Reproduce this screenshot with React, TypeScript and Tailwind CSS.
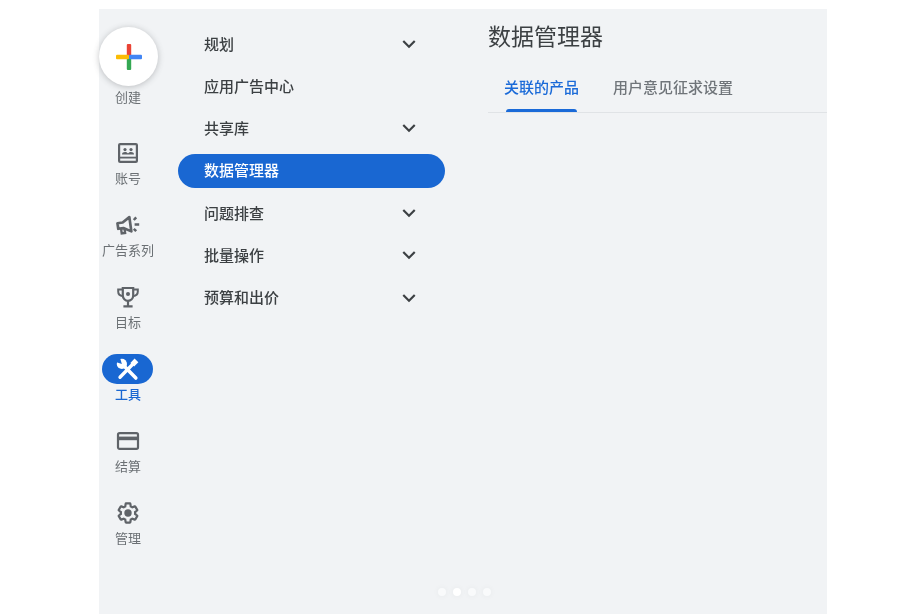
import React from "react";
import { MdExpandMore } from "react-icons/md";

const font = { fontFamily: '"Noto Sans CJK SC", "Liberation Sans", sans-serif' };
const gray = "#5f6368";

function AccountIcon() {
  return (
    <svg width="24" height="24" viewBox="0 0 24 24" fill="none">
      <rect x="3.1" y="3.1" width="17.8" height="17.8" rx="1" stroke={gray} strokeWidth="2.2" />
      <circle cx="9" cy="8.6" r="1.6" fill={gray} />
      <circle cx="15" cy="8.6" r="1.6" fill={gray} />
      <path d="M6 13.4c0-1.6 1.4-2.4 3-2.4s2.5.7 3 1.4c.5-.7 1.4-1.4 3-1.4s3 .8 3 2.4z" fill={gray} />
      <path d="M4 16.6h16" stroke={gray} strokeWidth="1.8" />
    </svg>
  );
}

function CampaignIcon() {
  return (
    <svg width="24" height="24" viewBox="0 0 24 24" fill="none">
      <g transform="rotate(-8 9 12)">
        <path d="M1.8 9.2H7l7.4-4.4v14.4L7 14.8H1.8z" stroke={gray} strokeWidth="2.7" strokeLinejoin="round" />
        <path d="M4.6 15v4.8h3.4V15" stroke={gray} strokeWidth="2.4" />
      </g>
      <path d="M17.8 7l2.4-2.6M18.6 11.4h4.6M17.8 15.8l2.4 2.4" stroke={gray} strokeWidth="2.5" />
    </svg>
  );
}

function TrophyIcon() {
  return (
    <svg width="24" height="24" viewBox="0 0 24 24" fill="none">
      <path d="M6.8 3h10.4v7.6a5.2 5.2 0 0 1-10.4 0z" stroke={gray} strokeWidth="2.2" />
      <path d="M6.8 4.4H2.2v2.2c0 2.6 2 4.4 4.8 4.6M17.2 4.4h4.6v2.2c0 2.6-2 4.4-4.8 4.6" stroke={gray} strokeWidth="2" />
      <path d="M12 15.8v5M7.4 21.4h9.2" stroke={gray} strokeWidth="2.2" />
      <circle cx="12" cy="9" r="2" fill={gray} />
    </svg>
  );
}

function ToolsIcon() {
  return (
    <svg width="25" height="25" viewBox="0 0 24 24" fill="none">
      <path d="M17 7 4.8 19.4" stroke="#ffffff" strokeWidth="3.2" strokeLinecap="round" />
      <path d="M16.6 7.4 20.6 3.2" stroke="#ffffff" strokeWidth="5" />
      <path d="M8 8 20 20.2" stroke="#ffffff" strokeWidth="3.4" strokeLinecap="round" />
      <circle cx="6.6" cy="6.6" r="4.9" fill="#ffffff" />
      <path d="M6.6 6.6 0 4.6 4.6 0z" fill="#1967d2" />
    </svg>
  );
}

function CardIcon() {
  return (
    <svg width="24" height="24" viewBox="0 0 24 24" fill="none">
      <rect x="2" y="4.1" width="20" height="15.8" rx="1.6" stroke={gray} strokeWidth="2.2" />
      <rect x="2" y="7.6" width="20" height="3.6" fill={gray} />
    </svg>
  );
}

function GearIcon() {
  return (
    <svg width="26" height="26" viewBox="0 0 24 24" fill="none">
      <g transform="translate(12 12) scale(.88) translate(-12 -12)">
        <path
          d="M19.43 12.98c.04-.32.07-.64.07-.98 0-.34-.03-.66-.07-.98l2.11-1.65c.19-.15.24-.42.12-.64l-2-3.46c-.09-.16-.26-.25-.44-.25-.06 0-.12.01-.17.03l-2.49 1c-.52-.4-1.08-.73-1.69-.98l-.38-2.65C14.46 2.18 14.25 2 14 2h-4c-.25 0-.46.18-.49.42l-.38 2.65c-.61.25-1.17.59-1.69.98l-2.49-1c-.06-.02-.12-.03-.18-.03-.17 0-.34.09-.43.25l-2 3.46c-.13.22-.07.49.12.64l2.11 1.65c-.04.32-.07.65-.07.98 0 .33.03.66.07.98l-2.11 1.65c-.19.15-.24.42-.12.64l2 3.46c.09.16.26.25.44.25.06 0 .12-.01.17-.03l2.49-1c.52.4 1.08.73 1.69.98l.38 2.65c.03.24.24.42.49.42h4c.25 0 .46-.18.49-.42l.38-2.65c.61-.25 1.17-.59 1.69-.98l2.49 1c.06.02.12.03.18.03.17 0 .34-.09.43-.25l2-3.46c.12-.22.07-.49-.12-.64l-2.11-1.65z"
          stroke={gray}
          strokeWidth="2.3"
        />
      </g>
      <circle cx="12" cy="12" r="3.4" fill={gray} />
    </svg>
  );
}

function PlusLogo() {
  return (
    <svg width="28" height="28" viewBox="0 0 28 28">
      <rect x="11.8" y="1" width="4.4" height="13" rx="1" fill="#ea4335" />
      <rect x="11.8" y="14" width="4.4" height="13" rx="1" fill="#34a853" />
      <rect x="1" y="11.8" width="13" height="4.4" rx="1" fill="#fbbc04" />
      <rect x="14" y="11.8" width="13" height="4.4" rx="1" fill="#4285f4" />
    </svg>
  );
}

const railItems = [
  { label: "账号", icon: <AccountIcon /> },
  { label: "广告系列", icon: <CampaignIcon /> },
  { label: "目标", icon: <TrophyIcon /> },
  { label: "工具", icon: <ToolsIcon />, active: true },
  { label: "结算", icon: <CardIcon /> },
  { label: "管理", icon: <GearIcon /> },
];

const navItems = [
  { label: "规划", more: true },
  { label: "应用广告中心" },
  { label: "共享库", more: true },
  { label: "数据管理器", active: true },
  { label: "问题排查", more: true },
  { label: "批量操作", more: true },
  { label: "预算和出价", more: true },
];

export default function App() {
  return (
    <div className="h-[615px] w-[921px] overflow-hidden bg-white pl-[99px] pt-[9px]" style={font}>
      <div className="relative flex h-[605px] w-[728px] bg-[#f1f3f5] blur-[0.5px]">
        <aside className="flex w-[58px] shrink-0 flex-col items-center pt-[18px]">
          <div className="flex h-[59px] w-[59px] shrink-0 items-center justify-center self-start rounded-full bg-white shadow-[0_1px_6px_rgba(60,64,67,0.3)]">
            <PlusLogo />
          </div>
          <div className="mt-[3px] h-[16px] text-[13px] leading-[16px] text-[#6b7074]">创建</div>
          <div className="h-[33px]" />
          {railItems.map((item) => (
            <div key={item.label} className="flex h-[72px] w-full flex-col items-center">
              <div className={`mr-[1px] flex h-[30px] w-[51px] items-center justify-center rounded-full ${item.active ? "bg-[#1967d2]" : ""}`}>
                {item.icon}
              </div>
              <div className={`mt-[2px] whitespace-nowrap text-[13px] leading-[16px] ${item.active ? "font-medium text-[#1967d2]" : "text-[#6b7074]"}`}>
                {item.label}
              </div>
            </div>
          ))}
        </aside>

        <nav className="ml-[21px] w-[267px] shrink-0 pt-[13.6px]">
          {navItems.map((item) => (
            <div key={item.label} className="flex h-[42.33px] items-center">
              <div className={`flex h-[34px] w-full items-center justify-between rounded-full pl-[26px] pr-[26px] text-[15px] font-medium ${item.active ? "bg-[#1967d2] text-white" : "text-[#3c4043]"}`}>
                <span>{item.label}</span>
                {item.more && <MdExpandMore size={26} color="#3c4043" className="-mr-[3px]" />}
              </div>
            </div>
          ))}
        </nav>

        <main className="ml-[43px] min-w-0 flex-1 pt-[10px]">
          <h1 className="h-[32px] text-[23px] font-normal leading-[32px] text-[#3c4043]">数据管理器</h1>
          <div className="mt-[12px] flex h-[50px] gap-[34px] border-b border-[#e0e3e6] pl-[16px]">
            <div className="flex flex-col items-center justify-end">
              <span className="text-[15px] font-medium leading-[22px] text-[#1a6ad8]">关联的产品</span>
              <div className="mt-[11px] h-[3px] w-[71px] rounded-t-[3px] bg-[#1a6ad8]" />
            </div>
            <div className="flex flex-col justify-end">
              <span className="mb-[14px] text-[15px] font-medium leading-[22px] text-[#70757a]">用户意见征求设置</span>
            </div>
          </div>
        </main>

        <div className="absolute bottom-[18px] left-[339px] flex gap-[7px]">
          <span className="h-[8px] w-[8px] rounded-full bg-[#f9fafb] shadow-[0_0_6px_rgba(0,0,0,0.05)]" />
          <span className="h-[8px] w-[8px] rounded-full bg-white shadow-[0_0_6px_rgba(0,0,0,0.05)]" />
          <span className="h-[8px] w-[8px] rounded-full bg-[#f9fafb] shadow-[0_0_6px_rgba(0,0,0,0.05)]" />
          <span className="h-[8px] w-[8px] rounded-full bg-[#f9fafb] shadow-[0_0_6px_rgba(0,0,0,0.05)]" />
        </div>
      </div>
    </div>
  );
}
